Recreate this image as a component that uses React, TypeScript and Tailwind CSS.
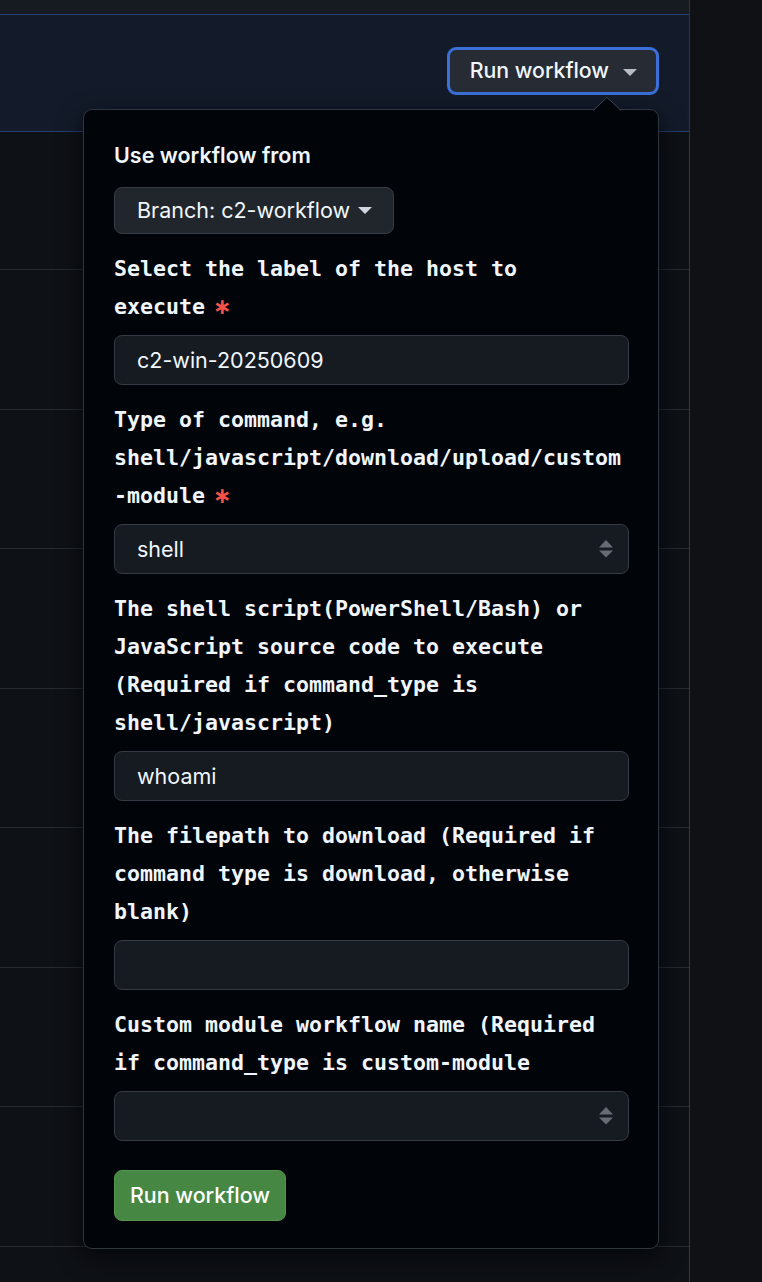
import React from "react";

const SANS = { fontFamily: "Inter, 'Noto Sans', sans-serif" };
const MONO = { fontFamily: "'DejaVu Sans Mono', 'Liberation Mono', monospace" };
const STAR = { fontFamily: "'DejaVu Sans', sans-serif" };

function Caret({ className }: { className?: string }) {
  return (
    <svg className={className} width="14" height="7" viewBox="0 0 14 7">
      <path d="M0 0 L14 0 L7 7 Z" fill="currentColor" />
    </svg>
  );
}

function UpDown() {
  return (
    <svg width="14" height="18" viewBox="0 0 14 18" className="shrink-0">
      <path d="M0 7.5 L7 0 L14 7.5 Z" fill="#656c76" />
      <path d="M0 10.5 L14 10.5 L7 17.5 Z" fill="#656c76" />
    </svg>
  );
}

function Star() {
  return (
    <span className="text-[#f85149] font-bold text-[22px] ml-[8px]" style={STAR}>
      ∗
    </span>
  );
}

function Label({ children }: { children: React.ReactNode }) {
  return (
    <div
      className="text-[21.6px] leading-[38px] font-bold text-[#f0f6fc] break-words mb-[9px]"
      style={MONO}
    >
      {children}
    </div>
  );
}

function TextInput({ value }: { value?: string }) {
  return (
    <div
      className="h-[50px] rounded-[8px] border border-[#353b44] bg-[#161a21] flex items-center pl-[22px] text-[21.5px] text-[#f0f6fc]"
      style={SANS}
    >
      {value}
    </div>
  );
}

function SelectInput({ value }: { value?: string }) {
  return (
    <div
      className="h-[50px] rounded-[8px] border border-[#353b44] bg-[#161a21] flex items-center justify-between pl-[22px] pr-[15px] text-[21.5px] text-[#f0f6fc]"
      style={SANS}
    >
      <span>{value}</span>
      <UpDown />
    </div>
  );
}

function Field({ label, children }: { label: React.ReactNode; children: React.ReactNode }) {
  return (
    <div className="mt-[16px]">
      <Label>{label}</Label>
      {children}
    </div>
  );
}

export default function App() {
  const rowHeights = [
    "h-[138px]",
    "h-[139.5px]",
    "h-[139.5px]",
    "h-[139.5px]",
    "h-[139.5px]",
    "h-[139.5px]",
    "h-[139.5px]",
    "h-[139.5px]",
    "h-[139.5px]",
  ];
  return (
    <div className="h-[1282px] w-full bg-[#0e1116] flex overflow-hidden" style={SANS}>
      <div className="w-[690px] shrink-0 border-r border-[#30363d] flex flex-col">
        <div className="h-[14px] shrink-0 bg-[#161b22]" />
        <div className="h-[118px] shrink-0 border-y border-[#24406e] bg-[#131b2a] flex justify-end items-start pt-[32px] pr-[30px]">
          <div className="relative z-10">
            <button className="h-[48px] rounded-[9px] border-[3px] border-[#3a70d8] bg-[#262b34] flex items-center pl-[20px] pr-[19px] gap-[14px] text-[21.3px] font-medium text-[#f0f6fc]">
              <span>Run workflow</span>
              <Caret className="text-[#b7bdc6] mt-[2px]" />
            </button>

            <div className="absolute right-0 top-[calc(100%+14px)] w-[576px] rounded-[9px] border border-[#30363d] bg-[#010409] shadow-[0_8px_24px_rgba(1,4,9,0.8)] pl-[30px] pr-[29px] pt-[30px] pb-[27px]">
              <svg
                width="28"
                height="14"
                viewBox="0 0 28 14"
                className="absolute -top-[13px] right-[37px]"
              >
                <path d="M0 14 L14 0.5 L28 14 Z" fill="#010409" />
                <path d="M0 13.5 L14 0.5 L28 13.5" fill="none" stroke="#3d444d" strokeWidth="1" />
              </svg>

              <div className="text-[21.5px] leading-[30px] font-semibold text-[#f0f6fc]">Use workflow from</div>
              <div className="mt-[17px]">
                <button className="h-[47px] inline-flex items-center gap-[8px] rounded-[8px] border border-[#363c45] bg-[#21262d] pl-[22px] pr-[21px] text-[21.5px] text-[#f0f6fc]">
                  <span>Branch: c2-workflow</span>
                  <Caret className="text-[#d1d7e0]" />
                </button>
              </div>

              <div>
                <Field
                  label={
                    <>
                      Select the label of the host to execute
                      <Star />
                    </>
                  }
                >
                  <TextInput value="c2-win-20250609" />
                </Field>
                <Field
                  label={
                    <>
                      Type of command, e.g. shell/javascript/download/upload/custom
                      <wbr />
                      <span className="whitespace-nowrap">
                        -module
                        <Star />
                      </span>
                    </>
                  }
                >
                  <SelectInput value="shell" />
                </Field>
                <Field label="The shell script(PowerShell/Bash) or JavaScript source code to execute (Required if command_type is shell/javascript)">
                  <TextInput value="whoami" />
                </Field>
                <Field label="The filepath to download (Required if command type is download, otherwise blank)">
                  <TextInput />
                </Field>
                <Field label="Custom module workflow name (Required if command_type is custom-module">
                  <SelectInput />
                </Field>
              </div>

              <button className="mt-[29px] h-[51px] rounded-[8px] border border-[#55964f] bg-[#468843] px-[15px] text-[21.4px] font-medium text-white">
                Run workflow
              </button>
            </div>
          </div>
        </div>
        {rowHeights.map((h, i) => (
          <div key={i} className={`${h} shrink-0 border-b border-[#262b33] bg-[#0e1116]`} />
        ))}
      </div>
      <div className="flex-1 bg-[#0f1115]" />
    </div>
  );
}
